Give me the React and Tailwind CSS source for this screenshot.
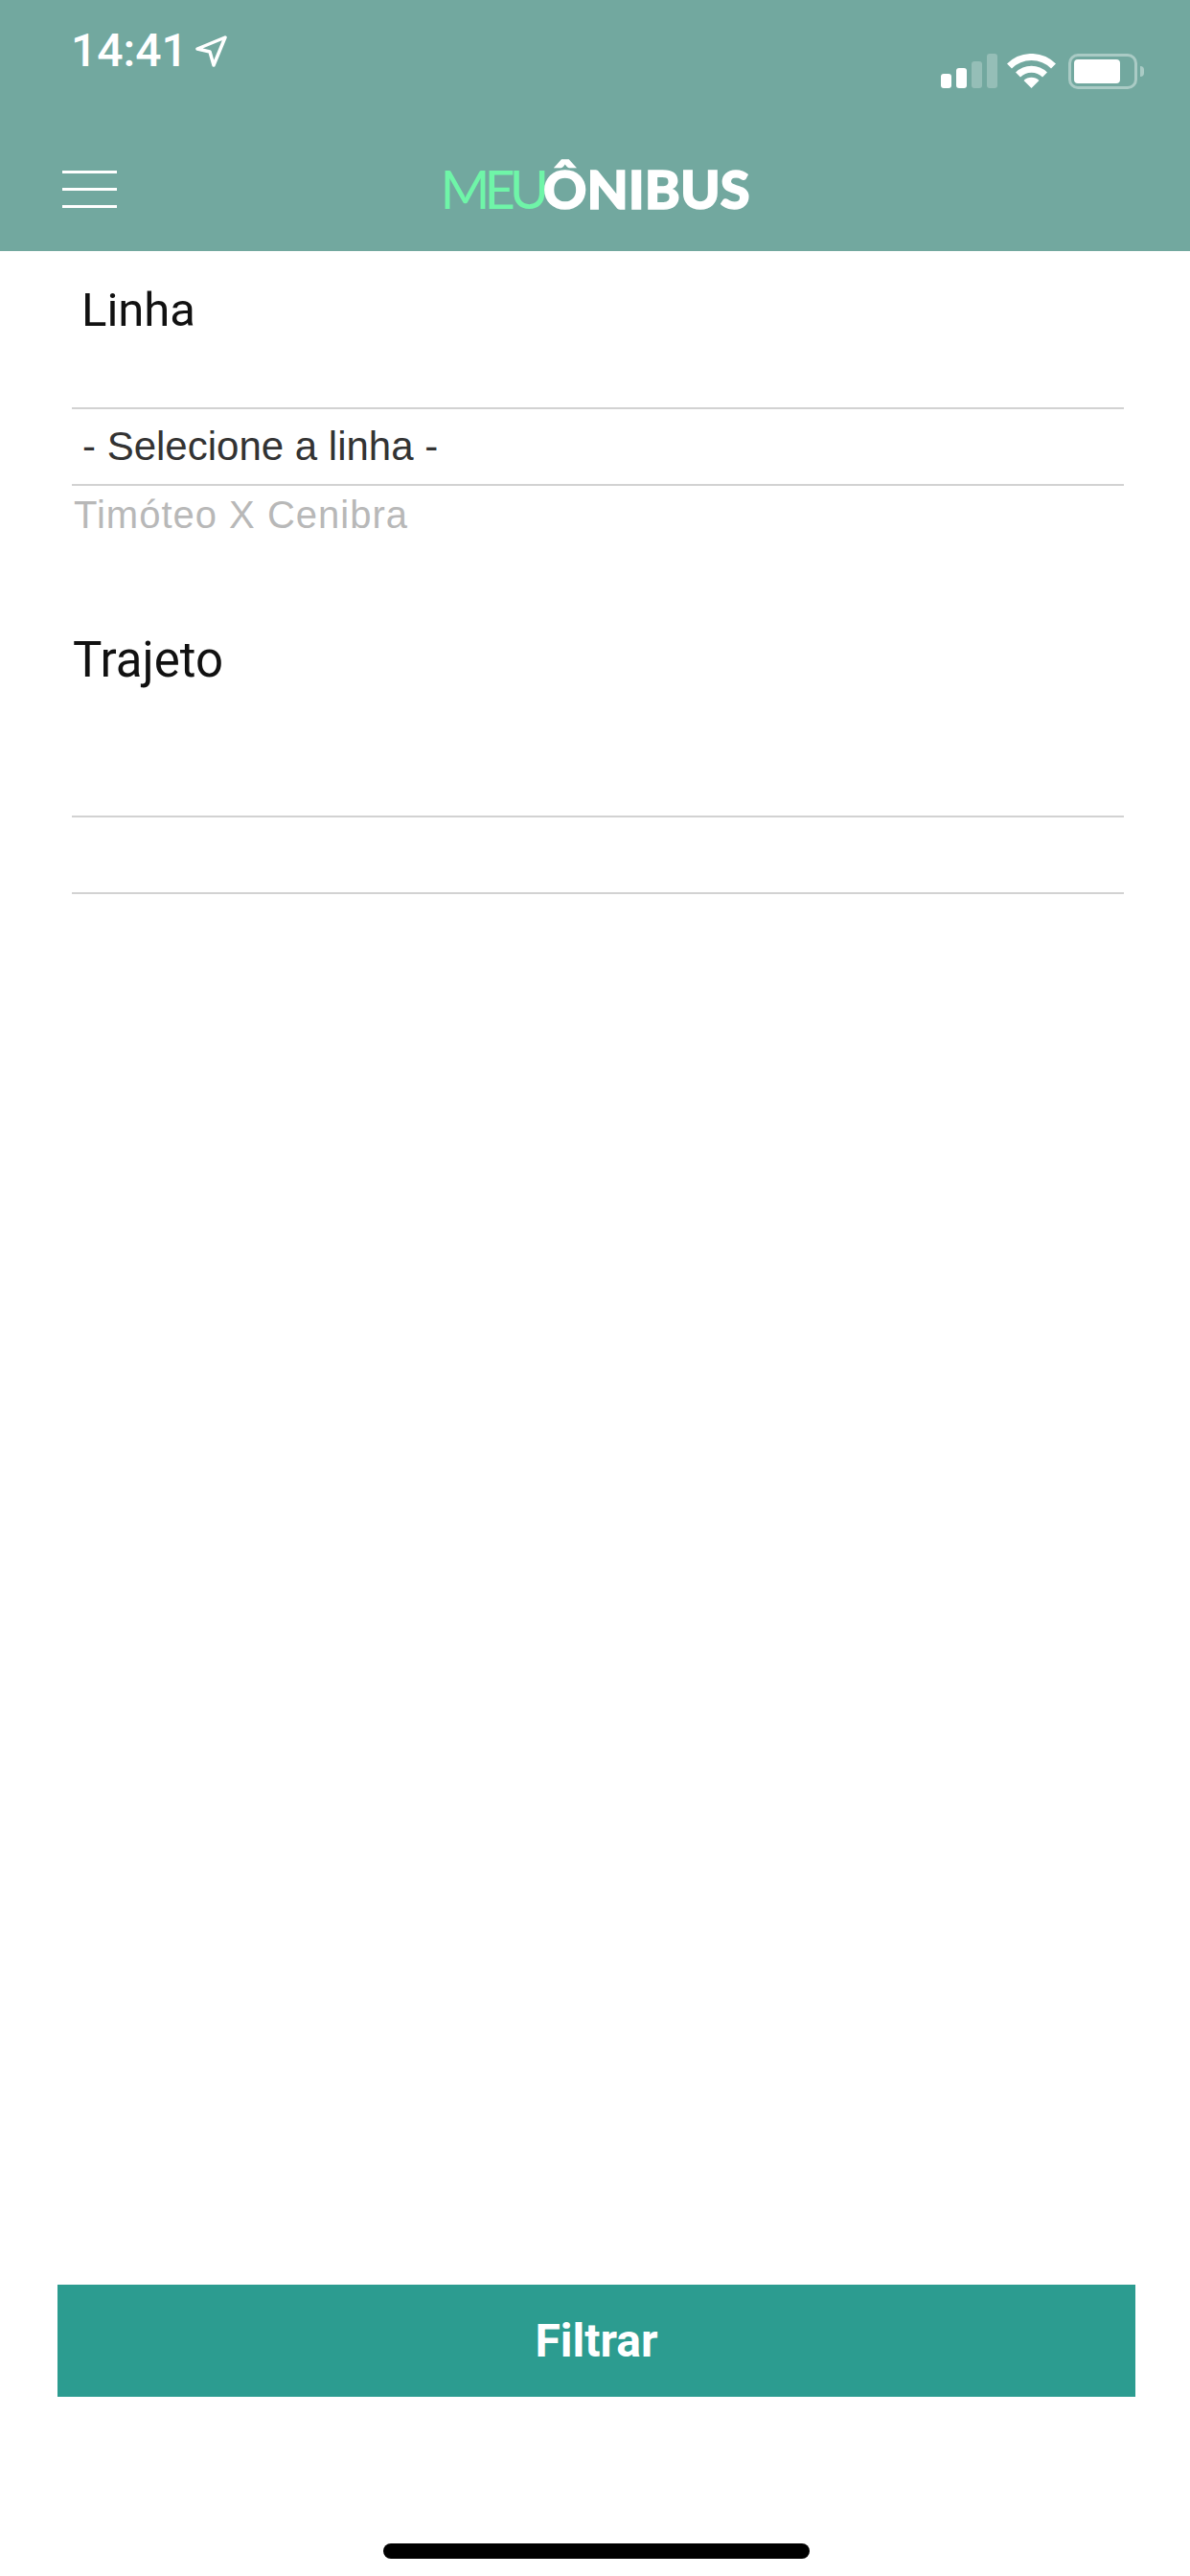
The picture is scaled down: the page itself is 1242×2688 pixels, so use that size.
const SelectRow = ({ children }) => (
  <div className="h-[82px] border-y-2 border-[#d2d2d2] flex items-center pl-[11px]">{children}</div>
);

const StatusIcons = () => (
  <div className="flex items-start mt-[56px]">
    <div className="flex items-end gap-[5px] h-[36px]">
      <div className="w-[11px] h-[15px] rounded-[3px] bg-white" />
      <div className="w-[11px] h-[21px] rounded-[3px] bg-white" />
      <div className="w-[11px] h-[28px] rounded-[3px] bg-white/25" />
      <div className="w-[11px] h-[36px] rounded-[3px] bg-white/25" />
    </div>
    <svg className="ml-[10px]" width="51" height="36" viewBox="0 0 51 36" fill="none" stroke="white">
      <path d="M2.5 13 A32.5 32.5 0 0 1 48.5 13" strokeWidth="7" />
      <path d="M11.5 22 A19.8 19.8 0 0 1 39.5 22" strokeWidth="7" />
      <path d="M25.5 36 L17.5 28 A11.3 11.3 0 0 1 33.5 28 Z" fill="white" stroke="none" />
    </svg>
    <div className="ml-[13px] w-[72px] h-[37px] rounded-[10px] border-[3px] border-white/40 p-[3px] pr-[15px]">
      <div className="h-full rounded-[4px] bg-white" />
    </div>
    <div className="ml-[3px] mt-[13px] w-[4px] h-[11px] rounded-r-[4px] bg-white/40" />
  </div>
);

export default function App() {
  return (
    <div className="w-[1242px] h-[2688px] bg-white flex flex-col font-['Roboto',sans-serif] overflow-hidden">
      <header className="h-[262px] bg-[#72a89f] shrink-0">
        <div className="flex justify-between pl-[74px] pr-[48px]">
          <div className="flex items-start mt-[29px]">
            <span className="text-[48px] leading-none font-medium text-white">14:41</span>
            <svg className="ml-[8px] mt-[8px]" width="33" height="33" viewBox="0 0 33 33" fill="none" stroke="white" strokeWidth="3.5" strokeLinejoin="round">
              <path d="M31 2 L2 14 L15 17 L19 31 Z" />
            </svg>
          </div>
          <StatusIcons />
        </div>
        <nav className="grid grid-cols-[1fr_auto_1fr] items-center mt-[76px] pl-[65px]">
          <button className="w-[57px] flex flex-col gap-[15px]">
            <span className="h-[3px] bg-white" />
            <span className="h-[3px] bg-white" />
            <span className="h-[3px] bg-white" />
          </button>
          <div className="text-[56px] leading-none font-['Lato',sans-serif] -ml-[65px]">
            <span className="font-normal text-[#6ff5a8] tracking-[-6px]">MEU</span>
            <span className="font-black text-white tracking-[0px] [-webkit-text-stroke:1.5px_white]">ÔNIBUS</span>
          </div>
          <div />
        </nav>
      </header>

      <main className="flex-1 flex flex-col pl-[75px] pr-[69px]">
        <label className="mt-[37px] pl-[10px] text-[49px] leading-none text-[#111]">Linha</label>
        <div className="mt-[77px]">
          <SelectRow>
            <span className="font-['Liberation_Sans',sans-serif] text-[42px] leading-none text-[#333]">- Selecione a linha -</span>
          </SelectRow>
        </div>
        <div className="pt-[6px] pl-[2px]">
          <span className="block font-['Liberation_Sans',sans-serif] text-[40px] tracking-[1px] leading-[48px] text-[#b8b8b8]">Timóteo X Cenibra</span>
        </div>

        <label className="mt-[102px] pl-px text-[51px] leading-none text-[#111]">Trajeto</label>
        <div className="mt-[137px]">
          <SelectRow />
        </div>

        <button className="-ml-[15px] -mr-[12px] mt-auto h-[117px] bg-[#2c9c90] text-white text-[48px] font-bold">Filtrar</button>
        <div className="mt-[153px] mb-[18px] ml-[325px] w-[445px] h-[16px] rounded-full bg-black" />
      </main>
    </div>
  );
}
